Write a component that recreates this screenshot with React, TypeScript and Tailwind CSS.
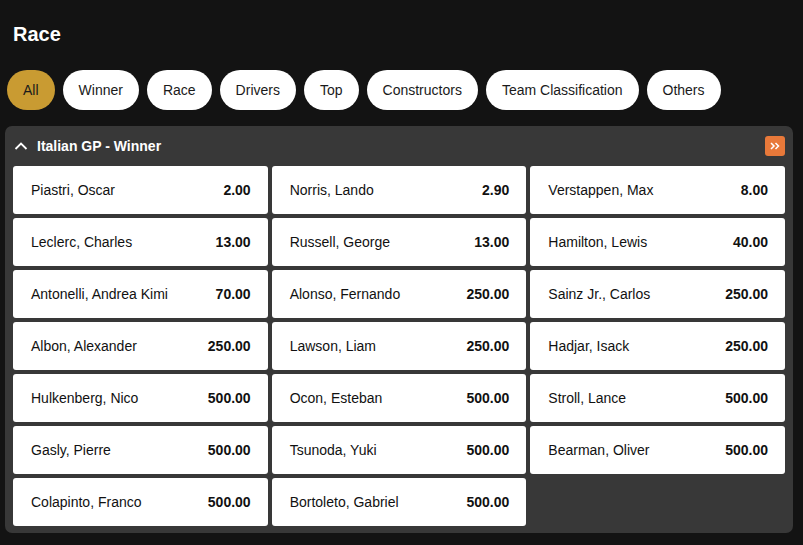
import React from "react";

const pills = ["All", "Winner", "Race", "Drivers", "Top", "Constructors", "Team Classification", "Others"];

const rows: [string, string][] = [
  ["Piastri, Oscar", "2.00"],
  ["Norris, Lando", "2.90"],
  ["Verstappen, Max", "8.00"],
  ["Leclerc, Charles", "13.00"],
  ["Russell, George", "13.00"],
  ["Hamilton, Lewis", "40.00"],
  ["Antonelli, Andrea Kimi", "70.00"],
  ["Alonso, Fernando", "250.00"],
  ["Sainz Jr., Carlos", "250.00"],
  ["Albon, Alexander", "250.00"],
  ["Lawson, Liam", "250.00"],
  ["Hadjar, Isack", "250.00"],
  ["Hulkenberg, Nico", "500.00"],
  ["Ocon, Esteban", "500.00"],
  ["Stroll, Lance", "500.00"],
  ["Gasly, Pierre", "500.00"],
  ["Tsunoda, Yuki", "500.00"],
  ["Bearman, Oliver", "500.00"],
  ["Colapinto, Franco", "500.00"],
  ["Bortoleto, Gabriel", "500.00"],
];

export default function App() {
  return (
    <div
      className="w-[803px] h-[545px] bg-[#131313] overflow-hidden"
      style={{ fontFamily: '"Liberation Sans", Arial, sans-serif' }}
    >
      <div className="pl-[13px] pt-[22px] h-[70px]">
        <h1 className="text-white font-bold text-[20px] leading-[24px]">Race</h1>
      </div>
      <div className="flex gap-[8px] pl-[7px] h-[40px]">
        {pills.map((p, i) => (
          <div
            key={p}
            className={
              "h-[40px] rounded-full flex items-center px-[16px] text-[14px] " +
              (i === 0 ? "bg-[#c99b32] text-[#1a1a1a]" : "bg-white text-[#1a1a1a]")
            }
          >
            {p}
          </div>
        ))}
      </div>
      <div className="mt-[16px] ml-[5px] w-[788px] bg-[#383838] rounded-[7px] px-[8px] pb-[7px]">
        <div className="h-[40px] flex items-center justify-between">
          <div className="flex items-center pl-[1px]">
            <svg width="14" height="10" viewBox="0 0 14 10" className="mr-[9px]">
              <path d="M1.5 8 L7 2.5 L12.5 8" stroke="white" strokeWidth="1.8" fill="none" />
            </svg>
            <span className="text-white font-bold text-[14px]">Italian GP - Winner</span>
          </div>
          <div className="w-[20px] h-[20px] rounded-[3px] bg-[#e8793a] flex items-center justify-center">
            <svg width="12" height="10" viewBox="0 0 12 10">
              <path d="M2 2 L5 5 L2 8 M6.5 2 L9.5 5 L6.5 8" stroke="white" strokeWidth="1.5" fill="none" />
            </svg>
          </div>
        </div>
        <div className="grid grid-cols-3 gap-[4px]">
          {rows.map(([n, o]) => (
            <div
              key={n}
              className="h-[48px] bg-white rounded-[3px] flex items-center justify-between pl-[18px] pr-[17px] text-[14px] text-[#111]"
            >
              <span>{n}</span>
              <span className="font-bold">{o}</span>
            </div>
          ))}
        </div>
      </div>
    </div>
  );
}
